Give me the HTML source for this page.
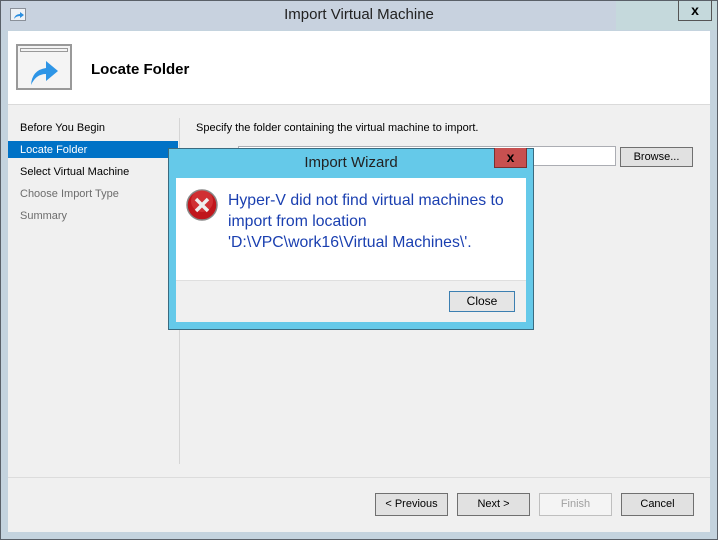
<!DOCTYPE html>
<html><head><style>
*{margin:0;padding:0;box-sizing:border-box}
body{width:718px;height:540px;position:relative;background:#c4d3de;font-family:"Liberation Sans",sans-serif;font-size:11px;overflow:hidden}
.a{position:absolute}
.btn{position:absolute;background:#e1e1e1;border:1px solid #707070;text-align:center;line-height:21px;font-size:11px;color:#000}
</style></head><body>
<div class="a" style="left:0;top:0;width:718px;height:540px;border:1px solid #5a6068;background:linear-gradient(90deg,#c8d2df 0,#c8d2df 615px,#c5d9dc 615px)"></div>
<div class="a" style="left:0;top:30px;width:718px;height:510px;background:#c4d3de;border:1px solid #5a6068;border-top:none"></div>
<div class="a" style="left:10px;top:8px;width:16px;height:13px;border:1px solid #8a9099;background:#eef2f6"><svg width="14" height="11"><path d="M3 10 Q4 5 9 5 L9 3 L13 6 L9 9 L9 7 Q5 7 3 10Z" fill="#2c8fe0"/></svg></div>
<div class="a" style="left:0;top:6px;width:718px;text-align:center;font-size:15px;color:#222">Import Virtual Machine</div>
<div class="a" style="left:678px;top:0;width:34px;height:21px;border:1px solid #555;border-top:none;text-align:center;font-weight:bold;font-size:14px;line-height:20px">x</div>
<div class="a" style="left:8px;top:31px;width:702px;height:501px;background:#f0f0f0"></div>
<div class="a" style="left:8px;top:31px;width:702px;height:74px;background:#fff;border-bottom:1px solid #dadada"></div>
<div class="a" style="left:16px;top:44px;width:56px;height:46px;border:2px solid #999;background:#f4f4f4">
<div style="position:absolute;left:2px;top:2px;right:2px;height:4px;border:1px solid #999"></div>
<svg class="a" style="left:10px;top:12px" width="34" height="28"><path d="M3 27 Q4 12 18 10 L18 3 L30 13 L18 23 L18 16 Q8 16 3 27Z" fill="#2e95e6"/></svg></div>
<div class="a" style="left:91px;top:61px;font-size:15px;font-weight:bold;color:#000">Locate Folder</div>
<div class="a" style="left:179px;top:118px;width:1px;height:346px;background:#d5d5d5"></div>
<div class="a" style="left:20px;top:122px;color:#000">Before You Begin</div>
<div class="a" style="left:8px;top:141px;width:170px;height:17px;background:#0072c6"></div>
<div class="a" style="left:20px;top:144px;color:#fff">Locate Folder</div>
<div class="a" style="left:20px;top:166px;color:#000">Select Virtual Machine</div>
<div class="a" style="left:20px;top:188px;color:#6d6d6d">Choose Import Type</div>
<div class="a" style="left:20px;top:210px;color:#6d6d6d">Summary</div>
<div class="a" style="left:196px;top:122px;color:#000">Specify the folder containing the virtual machine to import.</div>
<div class="a" style="left:238px;top:146px;width:378px;height:20px;background:#fff;border:1px solid #abadb3"></div>
<div class="btn" style="left:620px;top:147px;width:73px;height:20px;line-height:18px">Browse...</div>
<div class="a" style="left:8px;top:477px;width:702px;height:1px;background:#dcdcdc"></div>
<div class="btn" style="left:375px;top:493px;width:73px;height:23px">&lt; Previous</div>
<div class="btn" style="left:457px;top:493px;width:73px;height:23px">Next &gt;</div>
<div class="btn" style="left:539px;top:493px;width:73px;height:23px;background:#f4f4f4;border-color:#bfbfbf;color:#a0a0a0">Finish</div>
<div class="btn" style="left:621px;top:493px;width:73px;height:23px">Cancel</div>
<div class="a" style="left:168px;top:148px;width:366px;height:182px;background:#65c9e9;border:1px solid #3a6b80"></div>
<div class="a" style="left:168px;top:154px;width:366px;text-align:center;font-size:15px;color:#222">Import Wizard</div>
<div class="a" style="left:494px;top:148px;width:33px;height:20px;background:#c75050;border:1px solid #7a3030;border-top:none;text-align:center;font-weight:bold;font-size:14px;line-height:18px;color:#000">x</div>
<div class="a" style="left:176px;top:178px;width:350px;height:144px;background:#f0f0f0"></div>
<div class="a" style="left:176px;top:178px;width:350px;height:103px;background:#fff;border-bottom:1px solid #dfdfdf"></div>
<svg class="a" style="left:185px;top:188px" width="34" height="34"><circle cx="17" cy="17" r="15" fill="#c0161c" stroke="#888" stroke-width="1.5"/><circle cx="17" cy="13" r="11" fill="#e04a4a" opacity=".5"/><path d="M11 11 L23 23 M23 11 L11 23" stroke="#eee" stroke-width="3.5"/></svg>
<div class="a" style="left:228px;top:190px;font-size:15.8px;line-height:21px;color:#1a3fb0">Hyper-V did not find virtual machines to<br>import from location<br>'D:\VPC\work16\Virtual Machines\'.</div>
<div class="btn" style="left:449px;top:291px;width:66px;height:21px;line-height:19px;font-size:12px;border-color:#3c7fb1;background:#e5e5e5">Close</div>
</body></html>
